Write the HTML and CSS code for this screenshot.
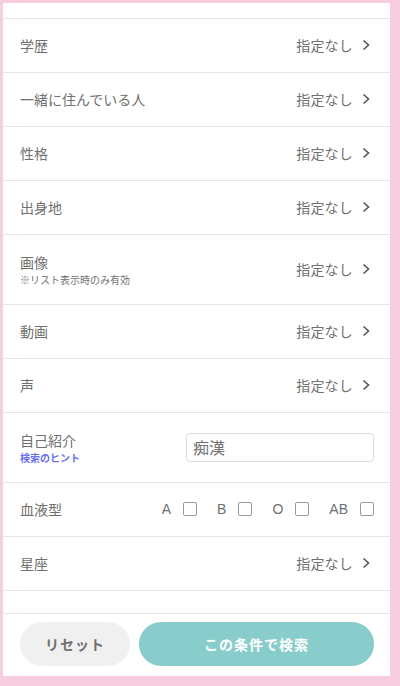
FILE: index.html
```html
<!DOCTYPE html>
<html lang="ja">
<head>
    <meta charset="UTF-8">
    <meta name="viewport" content="width=device-width, initial-scale=1.0">
    <title>検索条件</title>
    <link rel="stylesheet" href="styles.css">
</head>
<body>

    <div class="frame">
        <div class="list">
            <div class="row row-cut"></div>

            <div class="row">
                <span class="label">学歴</span>
                <span class="value">指定なし<svg class="chev" width="8" height="12" viewBox="0 0 8 12"><path d="M1.5 1.5 L6.5 6 L1.5 10.5"/></svg></span>
            </div>
            <div class="row">
                <span class="label">一緒に住んでいる人</span>
                <span class="value">指定なし<svg class="chev" width="8" height="12" viewBox="0 0 8 12"><path d="M1.5 1.5 L6.5 6 L1.5 10.5"/></svg></span>
            </div>
            <div class="row">
                <span class="label">性格</span>
                <span class="value">指定なし<svg class="chev" width="8" height="12" viewBox="0 0 8 12"><path d="M1.5 1.5 L6.5 6 L1.5 10.5"/></svg></span>
            </div>
            <div class="row">
                <span class="label">出身地</span>
                <span class="value">指定なし<svg class="chev" width="8" height="12" viewBox="0 0 8 12"><path d="M1.5 1.5 L6.5 6 L1.5 10.5"/></svg></span>
            </div>
            <div class="row row-tall">
                <div class="label-block">
                    <span class="label">画像</span>
                    <span class="note">※リスト表示時のみ有効</span>
                </div>
                <span class="value">指定なし<svg class="chev" width="8" height="12" viewBox="0 0 8 12"><path d="M1.5 1.5 L6.5 6 L1.5 10.5"/></svg></span>
            </div>
            <div class="row">
                <span class="label">動画</span>
                <span class="value">指定なし<svg class="chev" width="8" height="12" viewBox="0 0 8 12"><path d="M1.5 1.5 L6.5 6 L1.5 10.5"/></svg></span>
            </div>
            <div class="row">
                <span class="label">声</span>
                <span class="value">指定なし<svg class="chev" width="8" height="12" viewBox="0 0 8 12"><path d="M1.5 1.5 L6.5 6 L1.5 10.5"/></svg></span>
            </div>
            <div class="row row-tall">
                <div class="label-block">
                    <span class="label">自己紹介</span>
                    <a class="hint" href="#">検索のヒント</a>
                </div>
                <input class="keyword" type="text" value="痴漢">
            </div>
            <div class="row">
                <span class="label">血液型</span>
                <div class="blood">
                    <label class="blood-item">A<span class="box"></span></label>
                    <label class="blood-item">B<span class="box"></span></label>
                    <label class="blood-item">O<span class="box"></span></label>
                    <label class="blood-item">AB<span class="box"></span></label>
                </div>
            </div>
            <div class="row">
                <span class="label">星座</span>
                <span class="value">指定なし<svg class="chev" width="8" height="12" viewBox="0 0 8 12"><path d="M1.5 1.5 L6.5 6 L1.5 10.5"/></svg></span>
            </div>
            <div class="row"></div>
        </div>

        <div class="footer">
            <button class="reset-btn">リセット</button>
            <button class="search-btn">この条件で検索</button>
        </div>
    </div>

</body>
</html>
```

FILE: styles.css
```css
body {
    margin: 0;
    background-color: #f8cde0;
    font-family: "Noto Sans CJK JP", "Noto Sans", sans-serif;
    color: #707070;
}

.frame {
    background: white;
    margin: 3px 10px 0 3px;
    height: 673px;
    display: flex;
    flex-direction: column;
}

.list {
    flex: 1;
    overflow: hidden;
}

.row {
    height: 52px;
    border-bottom: 1px solid #e6e6e6;
    display: flex;
    align-items: center;
    justify-content: space-between;
    padding: 0 16px 1px 17px;
}

.row-cut {
    height: 15px;
    padding-bottom: 0;
}

.row-tall {
    height: 68px;
}

.row-tall + .row-tall {
    height: 69px;
}

.label {
    font-size: 14px;
    line-height: 20px;
}

.label-block {
    display: flex;
    flex-direction: column;
}

.note {
    font-size: 10px;
    line-height: 14px;
    margin-top: 1px;
}

.hint {
    font-size: 10px;
    line-height: 14px;
    margin-top: 1px;
    font-weight: bold;
    color: #6670f0;
    text-decoration: none;
}

.value {
    font-size: 14px;
    display: flex;
    align-items: center;
    letter-spacing: 0.2px;
}

.chev {
    margin: 0 4px 0 9px;
}

.chev path {
    fill: none;
    stroke: #555;
    stroke-width: 1.6;
}

.keyword {
    width: 188px;
    height: 29px;
    box-sizing: border-box;
    border: 1px solid #ddd;
    border-radius: 4px;
    padding: 0 6px;
    font-family: inherit;
    font-size: 16px;
    color: #707070;
}

.blood {
    display: flex;
    gap: 20px;
}

.blood-item {
    display: flex;
    align-items: center;
    font-family: "Liberation Sans", sans-serif;
    font-size: 14px;
}

.box {
    width: 12px;
    height: 12px;
    border: 1px solid #999;
    border-radius: 2px;
    margin-left: 12px;
}

.footer {
    height: 63px;
    border-top: 1px solid #e6e6e6;
    display: flex;
    gap: 9px;
    padding: 8px 16px 0 17px;
    box-sizing: border-box;
}

.reset-btn, .search-btn {
    height: 44px;
    border: none;
    border-radius: 22px;
    font-family: inherit;
    font-size: 14px;
    font-weight: bold;
    letter-spacing: 1px;
}

.reset-btn {
    width: 110px;
    background-color: #f0f0f0;
    color: #707070;
}

.search-btn {
    flex: 1;
    background-color: #88cdcb;
    color: white;
}
```
